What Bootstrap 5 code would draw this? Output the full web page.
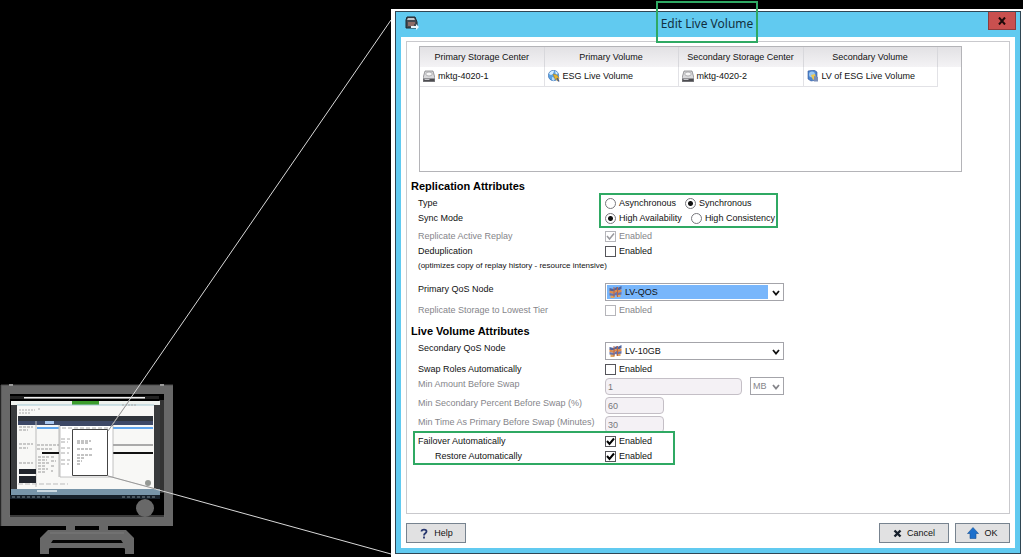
<!DOCTYPE html>
<html lang="en">
<head>
<meta charset="utf-8">
<meta name="viewport" content="width=device-width, initial-scale=1">
<title>Edit Live Volume</title>
<link href="https://cdn.jsdelivr.net/npm/bootstrap@5.3.0/dist/css/bootstrap.min.css" rel="stylesheet">
<style>
  body { background: #000; color: #111; font: 9px/15px "Liberation Sans", Arial, sans-serif; }
  .illus { flex: 0 0 391px; }
  .win-outer { background: #fff; padding: 2px 2px 3px 4px; margin-top: 9px; min-width: 0; }
  .win { border: 1px solid #2f4654; background: #61caf0; padding: 0 5px 5px; }
  .titlebar { height: 25px; }
  .win-title { font: 12px/20px "Noto Sans", "Open Sans", sans-serif; color: #12303f; margin: 2px 0 0 7px; }
  .note-box { position: relative; }
  .note-box::after { content: ""; position: absolute; border: 2px solid #2fa963; inset: 0; pointer-events: none; }
  .note-title::after { inset: -13px -5px -9px -5px; }
  .note-radios::after { inset: -3px -3px -2px -6px; }
  .note-failover { width: 259px; }
  .note-failover::after { inset: -3px -9px -1px 6px; }
  .close-btn { width: 28px; height: 18px; background: #c9504f; border: 1px solid #8e3b3c; border-top: 0; margin-right: -1px; }
  .inner { background: #fff; padding: 4px 5px 5px 5px; }
  .panel { border: 1px solid #c9c9cd; padding: 4px 0 20px; margin-bottom: 9px; }
  .grid-box { border: 1px solid #b4b4b8; margin: 0 47px 4px 12px; height: 126px; background: linear-gradient(#e2e1e4, #f4f3f5) top/100% 20px no-repeat #fff; }
  .vols { width: 517px; table-layout: fixed; border-collapse: collapse; }
  .vols th { height: 20px; padding: 0; font-weight: 400; text-align: center; border-right: 1px solid #d8d8dc; }
  .vols td { height: 19px; padding: 0 3px; border: solid #e2e2e6; border-width: 0 1px 1px 0; white-space: nowrap; }
  .vols td svg { margin-right: 3px; }
  .section-title { font-size: 11px; line-height: 20px; font-weight: 700; color: #000; margin: 0 0 0 4px; }
  .form-section { margin-bottom: 3px; }
  .form-line { display: flex; align-items: center; padding-left: 11px; min-height: 15px; }
  .form-tall { height: 19px; align-items: flex-start; }
  .form-pick { height: 21px; align-items: flex-start; }
  .form-apart { margin-top: 3px; }
  .line-label { flex: 0 0 187px; white-space: nowrap; }
  .line-indent { padding-left: 17px; }
  .off { color: #85858a; }
  .hint { font-size: 8px; line-height: 14px; padding-left: 11px; margin-bottom: 9px; }
  .opt { display: flex; align-items: center; gap: 3px; height: 15px; white-space: nowrap; }
  .radio-line { display: flex; gap: 9px; }
  input.tick, input.dot { appearance: none; margin: 0; width: 11px; height: 11px; border: 1px solid #55555a; background: #fff center/9px 9px no-repeat; flex: none; }
  input.dot { border-radius: 50%; border-color: #77777c; }
  input.dot:checked { background-image: radial-gradient(circle, #111 0 2px, transparent 3px); }
  input.tick:checked { background-image: url("data:image/svg+xml,%3Csvg xmlns='http://www.w3.org/2000/svg' viewBox='0 0 9 9'%3E%3Cpath d='M1 4l2.500 3L8 1.500' fill='none' stroke='%23000' stroke-width='2'/%3E%3C/svg%3E"); }
  input.tick:disabled { border-color: #b5b5ba; }
  input.tick:disabled:checked { background-image: url("data:image/svg+xml,%3Csvg xmlns='http://www.w3.org/2000/svg' viewBox='0 0 9 9'%3E%3Cpath d='M1 4l2.500 3L8 1.500' fill='none' stroke='%2399999e' stroke-width='1.500'/%3E%3C/svg%3E"); }
  .pick { position: relative; width: 179px; margin-top: 1px; }
  .pick select { display: block; appearance: none; width: 100%; height: 18px; border: 1px solid #a4a4aa; background: #fff; padding: 0 16px 0 19px; color: #111; border-radius: 0; }
  .pick-active select { background: linear-gradient(#78b6fb, #78b6fb) 1px 1px / calc(100% - 16px) calc(100% - 2px) no-repeat #fff; }
  .pick svg { position: absolute; top: 3px; pointer-events: none; }
  .pick .node { left: 4px; }
  .pick .chev { right: 3px; }
  .pick-unit { width: 34px; margin: 0 0 0 8px; color: #85858a; }
  .pick-unit select { padding: 0 0 0 2px; color: #85858a; opacity: 1; }
  .field { height: 17px; width: 59px; margin-top: 1px; border: 1px solid #c4bfc6; border-radius: 4px; background: #f4f1f5; color: #77777c; padding: 1px 2px 0; }
  .field-wide { width: 137px; }
  .cmd-bar { gap: 6px; }
  .cmd { display: flex; align-items: center; justify-content: center; gap: 5px; height: 20px; border: 1px solid #77838f; background: #e1e1e2; color: #111; padding: 0; }
  .cmd-help { width: 60px; }
  .cmd-ok { width: 55px; }
  .cmd-cancel { width: 70px; }
</style>
</head>
<body>
<svg width="0" height="0" class="position-absolute" aria-hidden="true">
  <defs>
    <symbol id="disk" viewBox="0 0 12 12"><path d="M2 1h8l2 7v3.500H0V8z" fill="#d9d9db" stroke="#77777a" stroke-width=".7"/><ellipse cx="6" cy="4" rx="3.200" ry="2" fill="#f7f7f7" stroke="#99999c" stroke-width=".7"/><path d="M.3 8.500h11.400V11.500H.3z" fill="#4c4c50"/><path d="M1.500 9.500h5" stroke="#c5c5c9"/></symbol>
    <symbol id="globe" viewBox="0 0 12 12"><circle cx="5.500" cy="5.500" r="5.200" fill="#5ba2e2" stroke="#3568ad" stroke-width=".6"/><path d="M1 4c1-3 4-3.500 5-3L5 4 3 5zM7 1l3 2-2 2z" fill="#d8efff"/><path d="M4 7l3 1-1 3-2-1z" fill="#b8dcf8"/><path d="M5 4l4 1 2 3-1 3-3-2z" fill="#e8b42c" stroke="#8d7730" stroke-width=".5"/><path d="M9 8l2 3.500" stroke="#485c8d" stroke-width="1.500"/></symbol>
    <symbol id="replica" viewBox="0 0 12 12"><path d="M1 1l6-1 3 2v8l-6 1-3-2z" fill="#4f86cf" stroke="#31569a" stroke-width=".6"/><circle cx="5" cy="4.500" r="3" fill="#9bc8f2"/><path d="M4 5l4-1 1 4-3 2z" fill="#edc74e"/><path d="M7 6l4 1v4.500H7z" fill="#7a8eb8"/></symbol>
    <symbol id="qos" viewBox="0 0 12 12"><path d="M0 2l4 1 3-2 1 1 4-2v3L8 5 6 4 4 5.500 0 5z" fill="#4f659f"/><path d="M0 4.500l4 1 3-2 1 1 4-1v2.500L8 7.500 6 6.500 4 8 0 7z" fill="#dd8c4c"/><path d="M0 7l4 1 3-2 1 1 4-1v2.500L8 10 6 9l-2 1.500L0 9.500z" fill="#6974ac"/><path d="M1 9.500l4 .5v2H1zM7 9.500l4-1V11H7z" fill="#e0a45f"/><path d="M4.500 1v10M8 1v10" stroke="#b5654a" stroke-width="1"/></symbol>
    <symbol id="chevron" viewBox="0 0 10 12"><path d="M2 5l3 3.500L8 5" fill="none" stroke="currentColor" stroke-width="1.800"/></symbol>
  </defs>
</svg>

<div class="d-flex min-vh-100">
  <aside class="illus">
    <svg class="d-block w-100" viewBox="0 0 391 557" role="img" aria-label="Monitor showing the management console">
      <rect x="5.500" y="389.500" width="163" height="132" fill="#000" stroke="#686868" stroke-width="9"/>
      <path d="M1 385h172M1 385v141" stroke="#4d4d4d"/>
      <path d="M9 516h156" stroke="#777"/>
      <g fill="#999"><rect x="9" y="384" width="4" height="2"/><rect x="160" y="384" width="4" height="2"/></g>
      <path d="M159 400h5v93h-5z" fill="#333"/>
      <circle cx="145" cy="508" r="9" fill="#686868"/>
      <path d="M66 525h9v6h-9zM99 525h9v6h-9z" fill="#686868"/>
      <path d="M48 530h78l8 8v16h-9v-5q0-1-2-1H51q-2 0-2 1v5h-9v-16z" fill="#686868"/>
      <path d="M53 540h68l2 3H51z" fill="#050505"/>
      <path d="M50 533h74" stroke="#7b7b7b"/>
      <!-- console desktop -->
      <path d="M10 396h149v3H10z" fill="#222"/>
      <path d="M24 397h121v1.500H24z" fill="#f4f4f4"/>
      <path d="M11 401h149v4H11z" fill="#eef2ee"/>
      <path d="M72 401h27v4H72z" fill="#3c9d2c"/>
      <path d="M11 405h6v84h-6zM154 405h6v84h-6z" fill="#393b3d"/>
      <path d="M17 405h137v84H17z" fill="#f8f8f6"/>
      <path d="M17 405h137" stroke="#a4c9d4"/>
      <path d="M19 410h16M38 409h2M19 413h11M122 405h14" stroke="#aaa" stroke-dasharray="2 1"/>
      <path d="M18 416h135v5H18z" fill="#2f343b"/>
      <path d="M18 421h135v4H18z" fill="#3d4866"/>
      <path d="M45 421h9v3h-9z" fill="#a9c7ef"/>
      <path d="M37 428h22M113 428h40" stroke="#62a6ed" stroke-width="2"/>
      <path d="M36 421v66M59 425v52" stroke="#bbb"/>
      <path d="M37 445h22M37 449h16M19 427h14M19 430h9M19 444h14M19 448h9M19 463h14M38 457h11M38 460h9M38 463h12M38 466h8M38 469h10M38 472h8M51 457h3M51 461h5M51 466h3M51 471h2" stroke="#999" stroke-dasharray="3 1"/>
      <path d="M42 453h17M113 453h40" stroke="#111" stroke-width="2"/>
      <path d="M113 445h40" stroke="#aaa" stroke-width="2"/>
      <path d="M19 469h17v5H19zM19 476h17v7H19z" fill="#20242c"/>
      <path d="M60 425h53v52H60z" fill="#fff" stroke="#aaa" stroke-width=".7"/>
      <path d="M60 425h53" stroke="#3d4866" stroke-width="2"/>
      <path d="M62 428h46M61 439h9M61 442h7M61 448h9M61 453h8M61 460h9M61 464h8" stroke="#aaa" stroke-dasharray="4 2"/>
      <path d="M72.500 429.500h35v46h-35z" fill="#fff" stroke="#444"/>
      <path d="M77 441h14M77 443h11M77 449h16M77 455h16M77 458h7M77 461h5M77 464h4" stroke="#888" stroke-dasharray="3 1"/>
      <path d="M18 484h50" stroke="#bbb" stroke-dasharray="5 2"/>
      <circle cx="148" cy="483" r="3" fill="#949894"/>
      <path d="M11 489h149v6H11z" fill="#7895a9"/>
      <path d="M37 491h20" stroke="#cbd9e1" stroke-width="2"/>
      <path d="M10 495h150v4H10z" fill="#17212b"/>
      <path d="M12 497h40M122 497h34" stroke="#80909a" stroke-dasharray="3 2"/>
      <!-- call-out lines -->
      <path d="M108 431L391 20M108 476L391 554" fill="none" stroke="#d8d8d8"/>
      <path d="M108 431l21-30M108 476l48 13" fill="none" stroke="#999"/>
    </svg>
  </aside>

  <main class="win-outer flex-grow-1 d-flex">
    <div class="win flex-grow-1 d-flex flex-column">
      <header class="titlebar d-flex justify-content-between align-items-start">
        <svg class="mt-1 ms-1" width="14" height="14" viewBox="0 0 14 14" aria-hidden="true"><path d="M2 1h8l2 5v6H1V4z" fill="#454b53" stroke="#20262d"/><path d="M3 2h6l1 2H2z" fill="#c3c7cb"/><path d="M3 7h7M3 9h6" stroke="#d98f7c"/><path d="M6 10h5V8l3 3-3 3v-2H6z" fill="#e9f6fb"/></svg>
        <h1 class="win-title note-box note-title">Edit Live Volume</h1>
        <button type="button" class="close-btn p-0 d-flex align-items-center justify-content-center" aria-label="Close"><svg width="8" height="8" viewBox="0 0 8 8"><path d="M1 .5l6 7M7 .5l-6 7" stroke="#1c0909" stroke-width="2"/></svg></button>
      </header>

      <form class="inner flex-grow-1 d-flex flex-column">
        <div class="panel flex-grow-1">
          <div class="grid-box">
            <table class="vols">
              <colgroup><col style="width:124px"><col style="width:134px"><col style="width:125px"><col style="width:134px"></colgroup>
              <thead><tr><th>Primary Storage Center</th><th>Primary Volume</th><th>Secondary Storage Center</th><th>Secondary Volume</th></tr></thead>
              <tbody><tr>
                <td><svg width="12" height="12"><use href="#disk"/></svg>mktg-4020-1</td>
                <td><svg width="12" height="12"><use href="#globe"/></svg>ESG Live Volume</td>
                <td><svg width="12" height="12"><use href="#disk"/></svg>mktg-4020-2</td>
                <td><svg width="12" height="12"><use href="#replica"/></svg>LV of ESG Live Volume</td>
              </tr></tbody>
            </table>
          </div>

          <section class="form-section">
            <h2 class="section-title">Replication Attributes</h2>
            <div class="d-flex">
              <div>
                <div class="form-line"><div class="line-label" id="l-type">Type</div></div>
                <div class="form-line"><div class="line-label" id="l-sync">Sync Mode</div></div>
              </div>
              <div class="note-box note-radios">
                <div class="radio-line" role="radiogroup" aria-labelledby="l-type">
                  <label class="opt"><input class="dot" type="radio" name="type">Asynchronous</label>
                  <label class="opt"><input class="dot" type="radio" name="type" checked>Synchronous</label>
                </div>
                <div class="radio-line" role="radiogroup" aria-labelledby="l-sync">
                  <label class="opt"><input class="dot" type="radio" name="sync" checked>High Availability</label>
                  <label class="opt"><input class="dot" type="radio" name="sync">High Consistency</label>
                </div>
              </div>
            </div>
            <div class="form-line form-apart off"><div class="line-label">Replicate Active Replay</div><label class="opt"><input class="tick" type="checkbox" checked disabled>Enabled</label></div>
            <div class="form-line"><div class="line-label">Deduplication</div><label class="opt"><input class="tick" type="checkbox">Enabled</label></div>
            <div class="hint">(optimizes copy of replay history - resource intensive)</div>
            <div class="form-line form-pick"><label class="line-label" for="qos1">Primary QoS Node</label>
              <div class="pick pick-active"><select id="qos1"><option>LV-QOS</option></select><svg class="node" width="13" height="12"><use href="#qos"/></svg><svg class="chev" width="10" height="12"><use href="#chevron"/></svg></div></div>
            <div class="form-line off"><div class="line-label">Replicate Storage to Lowest Tier</div><label class="opt"><input class="tick" type="checkbox" disabled>Enabled</label></div>
          </section>

          <section>
            <h2 class="section-title">Live Volume Attributes</h2>
            <div class="form-line form-pick"><label class="line-label" for="qos2">Secondary QoS Node</label>
              <div class="pick"><select id="qos2"><option>LV-10GB</option></select><svg class="node" width="13" height="12"><use href="#qos"/></svg><svg class="chev" width="10" height="12"><use href="#chevron"/></svg></div></div>
            <div class="form-line"><div class="line-label">Swap Roles Automatically</div><label class="opt"><input class="tick" type="checkbox">Enabled</label></div>
            <div class="form-line form-tall off"><label class="line-label" for="amt">Min Amount Before Swap</label><input class="field field-wide" id="amt" value="1" disabled>
              <div class="pick pick-unit"><select aria-label="Unit" disabled><option>MB</option></select><svg class="chev" width="10" height="12"><use href="#chevron"/></svg></div></div>
            <div class="form-line form-tall off"><label class="line-label" for="pct">Min Secondary Percent Before Swap (%)</label><input class="field" id="pct" value="60" disabled></div>
            <div class="form-line form-tall off"><label class="line-label" for="mins">Min Time As Primary Before Swap (Minutes)</label><input class="field" id="mins" value="30" disabled></div>
            <div class="note-box note-failover">
              <div class="form-line"><div class="line-label">Failover Automatically</div><label class="opt"><input class="tick" type="checkbox" checked>Enabled</label></div>
              <div class="form-line"><div class="line-label line-indent">Restore Automatically</div><label class="opt"><input class="tick" type="checkbox" checked>Enabled</label></div>
            </div>
          </section>
        </div>

        <footer class="cmd-bar d-flex">
          <button type="button" class="cmd cmd-help me-auto"><svg width="10" height="11" viewBox="0 0 10 11"><path d="M2.500 3.500C2.500 1 7.500 1 7.500 3.500 7.500 5.500 5 5 5 7.500M5 8.500v2" fill="none" stroke="#27366e" stroke-width="1.800"/></svg>Help</button>
          <button type="button" class="cmd cmd-cancel"><svg width="9" height="9" viewBox="0 0 9 9"><path d="M1.500 1.500l6 6M7.500 1.500l-6 6" stroke="#17202c" stroke-width="2.400"/></svg>Cancel</button>
          <button type="submit" class="cmd cmd-ok"><svg width="12" height="12" viewBox="0 0 12 12"><path d="M6 .5l5.500 6H9v5H3v-5H.5z" fill="#1d70cc" stroke="#175093" stroke-width=".6"/></svg>OK</button>
        </footer>
      </form>
    </div>
  </main>
</div>
<script src="https://cdn.jsdelivr.net/npm/bootstrap@5.3.0/dist/js/bootstrap.bundle.min.js"></script>
</body>
</html>
